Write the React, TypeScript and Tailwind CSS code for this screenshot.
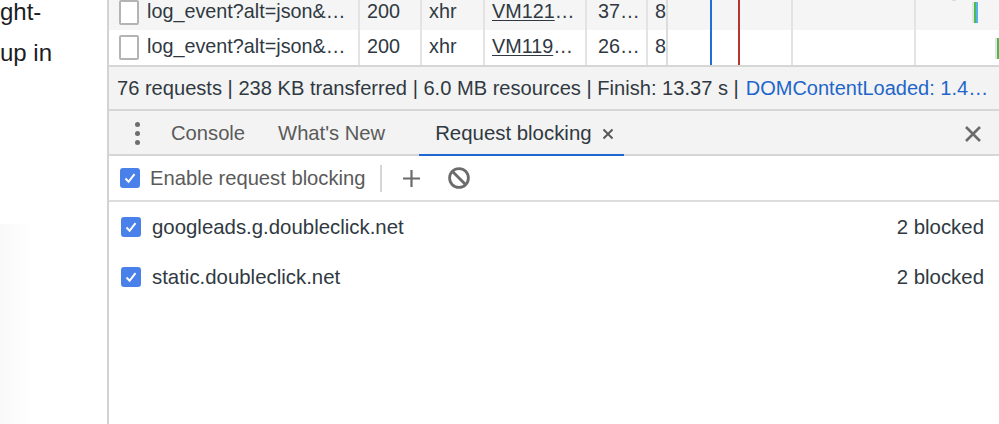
import React from "react";

function Check({ className = "" }: { className?: string }) {
  return (
    <span className={`flex h-[20px] w-[20px] shrink-0 items-center justify-center rounded-[3px] bg-[#4a80ea] ${className}`}>
      <svg width="14" height="14" viewBox="0 0 14 14" fill="none">
        <path d="M2.5 7.5 L5.6 10.8 L11.5 3.2" stroke="#fff" strokeWidth="2" />
      </svg>
    </span>
  );
}

function Row({ initiator, size, bg, bar }: { initiator: string; size: string; bg: string; bar: React.ReactNode }) {
  return (
    <div className={`flex h-[35px] items-center text-[#303942] ${bg}`}>
      <div className="flex h-full w-[251px] items-center border-r-2 border-[#e3e3e3] pb-[1px] pl-[10px]">
        <span className="h-[25px] w-[20px] shrink-0 rounded-[2px] border-2 border-[#b4b4b4] bg-white" />
        <span className="ml-[8px] whitespace-nowrap">log_event?alt=json&amp;…</span>
      </div>
      <div className="flex h-full w-[62px] items-center border-r-2 border-[#e3e3e3] pb-[1px] pl-[7px]">200</div>
      <div className="flex h-full w-[63px] items-center border-r-2 border-[#e3e3e3] pb-[1px] pl-[7px]">xhr</div>
      <div className="flex h-full w-[102px] items-center border-r-2 border-[#e3e3e3] pb-[1px] pl-[7px]">
        <span className="underline underline-offset-2">{initiator}</span>…
      </div>
      <div className="flex h-full w-[61px] items-center border-r-2 border-[#e3e3e3] pb-[1px] pl-[11px]">{size}…</div>
      <div className="flex h-full w-[18px] items-center overflow-hidden pb-[1px] pl-[7px]">8</div>
      <div className="h-full w-[2px] bg-[#dcdcdc]" />
      <div className="relative h-full flex-1">{bar}</div>
    </div>
  );
}

function Lines() {
  return (
    <div className="pointer-events-none absolute inset-0">
      <div className="absolute left-[710px] top-0 h-full w-[2px] bg-[#1f6fd6]" />
      <div className="absolute left-[738px] top-0 h-full w-[2px] bg-[#b8342c]" />
      <div className="absolute left-[791px] top-0 h-full w-[2px] bg-[#e3e3e3]" />
      <div className="absolute left-[914px] top-0 h-full w-[2px] bg-[#e3e3e3]" />
    </div>
  );
}

export default function App() {
  return (
    <div className="relative flex h-[424px] w-[999px] overflow-hidden bg-white font-['Liberation_Sans',Arial,sans-serif] text-[20.2px]">
      <div className="relative h-full w-[107px] shrink-0 overflow-hidden">
        <div className="text-[24px] text-[#1d1d1f]">
          <div className="h-[24px] leading-[24px]">ght-</div>
          <div className="mt-[17px] h-[24px] leading-[24px]">up in</div>
        </div>
        <div className="absolute bottom-0 left-0 h-[200px] w-[32px] bg-gradient-to-r from-[#f9f9f9] to-white" />
      </div>
      <div className="flex h-full min-w-0 flex-1 flex-col border-l-2 border-[#d3d3d3]">
        <div className="relative z-0 h-[65px] shrink-0 overflow-hidden">
          <div className="mt-[-5px] text-[19.8px]">
            <Row
              initiator="VM121"
              size="37"
              bg="bg-[#f5f5f5]"
              bar={
                <>
                  <span className="absolute left-[284px] top-[4px] h-[2px] w-[4px] bg-[#dddddd]" />
                  <span className="absolute left-[304px] top-[7px] flex h-[21px] w-[6px]">
                    <span className="h-full w-[2px] bg-[#e4e4e4]" />
                    <span className="h-full w-[2px] bg-[#4cba4c]" />
                    <span className="h-full w-[2px] bg-[#58b0ee]" />
                  </span>
                </>
              }
            />
            <Row
              initiator="VM119"
              size="26"
              bg="bg-white"
              bar={
                <span className="absolute left-[327px] top-[8px] flex h-[21px] w-[5px]">
                  <span className="h-full w-[2px] bg-[#e4e4e4]" />
                  <span className="h-full w-[3px] bg-[#4cba4c]" />
                </span>
              }
            />
          </div>
        </div>
        <div className="flex h-[46px] shrink-0 items-center whitespace-nowrap border-y-2 border-[#d6d6d6] bg-[#f3f3f3] pl-[8px] text-[20.1px] text-[#303942]">
          <span>76 requests | 238 KB transferred | 6.0 MB resources | Finish: 13.37 s | </span>
          <span className="ml-[7px] text-[20px] text-[#1f66c9]">DOMContentLoaded: 1.4…</span>
        </div>
        <div className="flex h-[45px] shrink-0 items-center border-b-2 border-[#d6d6d6] bg-[#f3f3f3] pt-[2px] text-[#5a5a5a]">
          <div className="ml-[24px] flex w-[8px] flex-col items-center gap-[4px]">
            <span className="h-[5px] w-[5px] rounded-full bg-[#6e6e6e]" />
            <span className="h-[5px] w-[5px] rounded-full bg-[#6e6e6e]" />
            <span className="h-[5px] w-[5px] rounded-full bg-[#6e6e6e]" />
          </div>
          <span className="ml-[30px]">Console</span>
          <span className="ml-[33px]">What's New</span>
          <div className="relative ml-[34px] flex h-full w-[205px] items-center pl-[16px] text-[20.4px] text-[#303942]">
            Request blocking
            <svg className="ml-[10px]" width="12" height="12" viewBox="0 0 12 12" fill="none">
              <path d="M1.5 1.5 L10.5 10.5 M10.5 1.5 L1.5 10.5" stroke="#555" strokeWidth="1.8" />
            </svg>
            <span className="absolute bottom-[-2px] left-0 h-[2px] w-full bg-[#1f66d0]" />
          </div>
          <svg className="ml-auto mr-[17px]" width="18" height="18" viewBox="0 0 18 18" fill="none">
            <path d="M2 2 L16 16 M16 2 L2 16" stroke="#6b6b6b" strokeWidth="2.6" />
          </svg>
        </div>
        <div className="flex h-[46px] shrink-0 items-center border-b-2 border-[#dcdcdc] text-[#5a5a5a]">
          <Check className="ml-[11px]" />
          <span className="ml-[10px]">Enable request blocking</span>
          <span className="ml-[15px] h-[27px] w-[2px] bg-[#d6d6d6]" />
          <svg className="ml-[20px]" width="19" height="19" viewBox="0 0 19 19" fill="none">
            <path d="M9.5 1 V18 M1 9.5 H18" stroke="#6b6b6b" strokeWidth="2.2" />
          </svg>
          <svg className="ml-[26px]" width="24" height="24" viewBox="0 0 24 24" fill="none">
            <circle cx="12" cy="12" r="9.4" stroke="#6b6b6b" strokeWidth="2.8" />
            <path d="M5.5 5.5 L18.5 18.5" stroke="#6b6b6b" strokeWidth="2.8" />
          </svg>
        </div>
        <div className="flex flex-col text-[20.4px] text-[#303942]">
          <div className="flex h-[50px] items-center pl-[12px] pr-[15px]">
            <Check />
            <span className="ml-[11px]">googleads.g.doubleclick.net</span>
            <span className="ml-auto">2 blocked</span>
          </div>
          <div className="flex h-[50px] items-center pl-[12px] pr-[15px]">
            <Check />
            <span className="ml-[11px]">static.doubleclick.net</span>
            <span className="ml-auto">2 blocked</span>
          </div>
        </div>
      </div>
      <div className="pointer-events-none absolute left-0 top-0 h-[65px] w-full">
        <Lines />
      </div>
    </div>
  );
}
